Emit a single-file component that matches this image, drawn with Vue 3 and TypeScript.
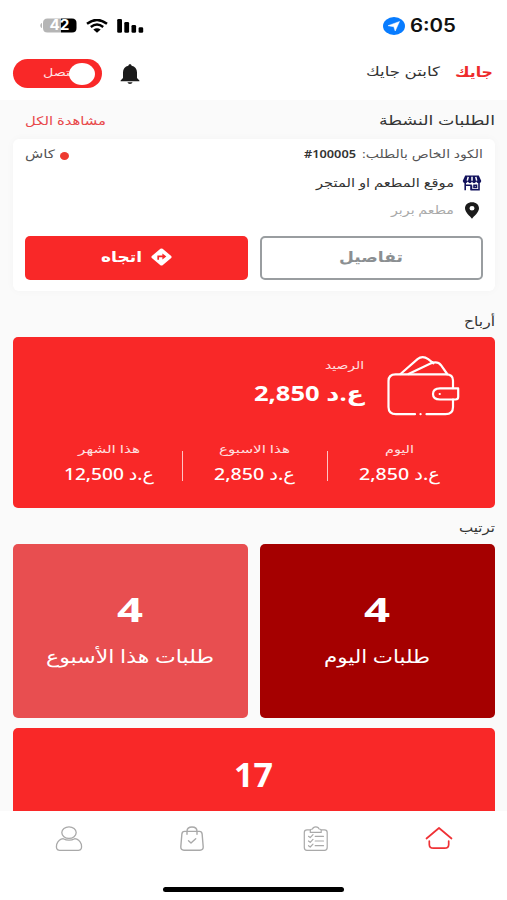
<script setup lang="ts">
import { h, type FunctionalComponent } from 'vue'

interface LabelProps {
  text: string
  w: number
  size: number
  h?: number
}

// Single-line label whose glyphs are fitted to a given width.
const FitText: FunctionalComponent<LabelProps> = (p) => {
  const height = p.h ?? 20
  return h('svg', { width: p.w, height, class: 'fit' }, [
    h(
      'text',
      {
        x: p.w / 2,
        y: height / 2 + p.size * 0.36,
        'font-size': p.size,
        'text-anchor': 'middle',
        textLength: p.w,
        lengthAdjust: 'spacingAndGlyphs',
        fill: 'currentColor',
      },
      p.text,
    ),
  ])
}
FitText.props = ['text', 'w', 'size', 'h']

interface Period {
  label: string
  labelWidth: number
  amount: string
  amountWidth: number
}

const periods: Period[] = [
  { label: 'اليوم', labelWidth: 29, amount: 'ع.د 2,850', amountWidth: 81 },
  { label: 'هذا الاسبوع', labelWidth: 71, amount: 'ع.د 2,850', amountWidth: 81 },
  { label: 'هذا الشهر', labelWidth: 62, amount: 'ع.د 12,500', amountWidth: 90 },
]

const tiles = [
  { tone: 'dark', count: '4', label: 'طلبات اليوم', width: 106 },
  { tone: 'soft', count: '4', label: 'طلبات هذا الأسبوع', width: 168 },
]
</script>

<template>
  <div class="screen" dir="rtl">
    <div class="status">
      <FitText class="time" text="6:05" :w="46" :size="18" />
      <svg class="loc" width="22" height="18" viewBox="0 0 22 18">
        <ellipse cx="11" cy="9" rx="11" ry="9" fill="#087cff" />
        <path d="M16.5 4.5 12.2 14 10.8 9.7 5 8.7Z" fill="#fff" stroke="#fff" stroke-width=".5" stroke-linejoin="round" />
      </svg>
      <span class="grow"></span>
      <svg class="signal" width="27" height="14" viewBox="0 0 27 14">
        <rect x="0.2" y="0" width="4.8" height="13.8" rx="1.3" />
        <rect x="7.3" y="3" width="4.8" height="10.8" rx="1.3" />
        <rect x="14.5" y="6" width="4.6" height="7.8" rx="1.3" />
        <rect x="21.6" y="8.3" width="4.6" height="5.5" rx="1.3" />
      </svg>
      <svg class="wifi" width="22" height="14" viewBox="0 0 22 14">
        <path d="M1 4.8Q11-3 21 4.8M4.8 8Q11 3.1 17.2 8" fill="none" stroke="#000" stroke-width="2.4" />
        <path d="M7.3 10.6Q11 7.9 14.7 10.6L11 13.8Z" />
      </svg>
      <svg class="battery" width="37" height="15" viewBox="0 0 37 15">
        <path d="M2 5C-.3 5.5-.3 9.5 2 10Z" fill="#b8b8b8" />
        <path d="M21 .5H7.5Q3 .5 3 5V10Q3 14.5 7.5 14.5H21Z" fill="#b5b5b5" />
        <path d="M21 .5H32Q36.5 .5 36.5 5V10Q36.5 14.5 32 14.5H21Z" fill="#000" />
        <text x="19.5" y="12.4" text-anchor="middle" textLength="20" lengthAdjust="spacingAndGlyphs" font-size="14" font-weight="700" fill="#fff">42</text>
      </svg>
    </div>

    <header class="header">
      <FitText class="brand" text="جايك" :w="38" :size="14" />
      <FitText class="name" text="كابتن جايك" :w="74" :size="13" />
      <span class="grow"></span>
      <svg class="bell" width="20" height="20" viewBox="0 0 20 20">
        <path d="M10 0.3C9 .3 8.4 1 8.4 1.8 5 2.5 3 5 3 8.3V14L.6 16.4V17.3H19.4V16.4L17 14V8.3C17 5 15 2.5 11.6 1.8 11.6 1 11 .3 10 .3ZM7.4 18.2Q8 20 10 20T12.6 18.2Z" fill="#1b1b1b" />
      </svg>
      <div class="toggle">
        <span class="knob"></span>
        <FitText class="state" text="متصل" :w="35" :size="10.5" />
      </div>
    </header>

    <main class="content">
      <div class="title first">
        <FitText text="الطلبات النشطة" :w="116" :size="13" />
        <FitText class="link" text="مشاهدة الكل" :w="81" :size="12" />
      </div>

      <section class="order">
        <div class="line code">
          <FitText class="muted" text="الكود الخاص بالطلب:" :w="121" :size="11.5" />
          <FitText class="number" text="#100005" :w="52" :size="11.5" />
          <span class="grow"></span>
          <span class="dot"></span>
          <FitText class="muted" text="كاش" :w="30" :size="11.5" />
        </div>
        <div class="line shop">
          <svg width="20" height="16" viewBox="0 0 20 16">
            <path d="M3.2.5H16.8L19.3 6Q18.8 8.2 16.8 8.2T14.2 6.6Q13.3 8.2 12 8.2T10 6.6Q9.2 8.2 8 8.2T5.8 6.6Q5 8.2 3.2 8.2T.7 6Z" fill="#11115c" />
            <path d="M6.2 1.8 5.3 5.7M10 1.8V5.7M13.8 1.8 14.7 5.7" stroke="#fff" stroke-width="1.5" />
            <path d="M3.2 8V15.2M17 8V14.8H9.5V10.6M3.2 10.3H9V15.2M12 10.3H14.5V12.5H12Z" fill="none" stroke="#11115c" stroke-width="1.6" />
          </svg>
          <FitText text="موقع المطعم او المتجر" :w="138" :size="12" />
        </div>
        <div class="line place">
          <svg width="20" height="17" viewBox="0 0 20 17">
            <path fill-rule="evenodd" d="M10 .3C5.8.3 3 2.9 3 6.3 3 10.5 8.2 14.3 10 16.7 11.8 14.3 17 10.5 17 6.3 17 2.9 14.2.3 10 .3ZM10 4.1A2.5 2.2 0 1 1 10 8.5 2.5 2.2 0 1 1 10 4.1Z" fill="#1b1b1b" />
          </svg>
          <FitText class="faint" text="مطعم بربر" :w="63" :size="11.5" />
        </div>
        <div class="actions">
          <button class="btn outline" type="button">
            <FitText text="تفاصيل" :w="64" :size="15" />
          </button>
          <button class="btn solid" type="button">
            <svg width="21" height="18" viewBox="0 0 21 18">
              <path d="M9.4.8Q10.5 0 11.6.8L20.2 8Q21 9 20.2 10L11.6 17.2Q10.5 18 9.4 17.2L.8 10Q0 9 .8 8Z" fill="#fff" />
              <path d="M7.2 11.7V8.4H12" fill="none" stroke="#f92828" stroke-width="1.7" />
              <path d="M11.4 5.4 15.3 8.4 11.4 11.4Z" fill="#f92828" />
            </svg>
            <FitText text="اتجاه" :w="41" :size="15" />
          </button>
        </div>
      </section>

      <div class="title second"><FitText text="أرباح" :w="31" :size="13" /></div>

      <section class="wallet">
        <div class="balance">
          <svg width="73" height="60" viewBox="0 0 73 60" fill="none" stroke="#fff" stroke-width="2.2" stroke-linecap="round">
            <path d="M28 58.2H9Q1.5 58.2 1.5 51V25Q1.5 18.3 8.5 18.3H59Q66 18.3 66 24.5V32.2M66 43.7V51Q66 58.2 58.5 58.2H39.5M33.5 58.2H33.6" />
            <path d="M71.2 32.4H53Q46 32.6 46 38T53 43.5H68.5Q71.2 43.5 71.2 41ZM52.7 38H52.8" stroke-linejoin="round" />
            <path d="M13.5 18 30.5 3.2Q35.5-.8 41.2 3.2L46.5 7.4M21.5 18 43.5 7.6Q50.5 4.7 54 9.2L60.2 18" />
          </svg>
          <div class="figures">
            <FitText class="caption" text="الرصيد" :w="39" :size="11" :h="18" />
            <FitText class="total" text="ع.د 2,850" :w="110" :size="21" :h="39" />
          </div>
        </div>
        <div class="periods">
          <div v-for="p in periods" :key="p.label" class="period">
            <FitText class="caption" :text="p.label" :w="p.labelWidth" :size="11" :h="18" />
            <FitText class="amount" :text="p.amount" :w="p.amountWidth" :size="17" :h="32" />
          </div>
        </div>
      </section>

      <div class="title third"><FitText text="ترتيب" :w="36" :size="13" /></div>

      <div class="tiles">
        <div v-for="t in tiles" :key="t.tone" class="tile" :class="t.tone">
          <FitText class="count" :text="t.count" :w="26" :size="34" :h="43" />
          <FitText :text="t.label" :w="t.width" :size="18" :h="52" />
        </div>
      </div>

      <div class="tile total-tile">
        <FitText class="count" text="17" :w="39" :size="34" :h="41" />
      </div>
    </main>

    <nav class="nav">
      <div class="tabs">
        <a class="tab active">
          <svg width="28" height="26" viewBox="0 0 28 26" stroke-width="1.7">
            <path d="M1.5 12.5 14 2 26.5 12.5M4.3 15V18.5Q4.3 22.2 8.5 22.2H19.5Q23.7 22.2 23.7 18.5V15" />
          </svg>
        </a>
        <a class="tab">
          <svg width="28" height="26" viewBox="0 0 28 26" stroke-width="1.2">
            <path d="M8.5 3.8H5Q2.3 3.8 2.3 6.5V21.5Q2.3 24.3 5 24.3H22.5Q25.2 24.3 25.2 21.5V6.5Q25.2 3.8 22.5 3.8H19M8.3 6.4V4.5Q8.3 3 10.5 3 11 .8 13.8.8T17 3Q19.2 3 19.2 4.5V6.4ZM6.5 10.3 8.2 11.6 11 8.7M13.2 10.3H21.5M6.5 15 8.2 16.3 11 13.4M13.2 15H21.5M6.5 19.7 8.2 21 11 18.1M13.2 19.7H21.5" />
          </svg>
        </a>
        <a class="tab">
          <svg width="28" height="26" viewBox="0 0 28 26" stroke-width="1.4">
            <path d="M6.5 5.4H21.5Q23.8 5.4 24.1 7.8L25.2 20.8Q25.4 24.2 22 24.2H6Q2.6 24.2 2.8 20.8L3.9 7.8Q4.2 5.4 6.5 5.4ZM9 8.3V5.4Q9 1 14 1T19 5.4V8.3M10.5 14.8 13 17 17.7 12.8" />
          </svg>
        </a>
        <a class="tab">
          <svg width="28" height="26" viewBox="0 0 28 26" stroke-width="1.3">
            <ellipse cx="14" cy="6.6" rx="7.2" ry="5.8" />
            <path d="M8.2 12.7Q3.8 13.3 1.7 18.2.5 24.3 4.5 24.3H23.5Q27.5 24.3 26.3 18.2 24.2 13.3 19.8 12.7 17 14.2 14 14.2T8.2 12.7Z" />
          </svg>
        </a>
      </div>
      <div class="indicator"></div>
    </nav>
  </div>
</template>

<style>
body {
  margin: 0;
}
</style>

<style scoped>
.screen {
  width: 507px;
  height: 900px;
  display: flex;
  flex-direction: column;
  overflow: hidden;
  background: #fff;
  color: #333;
  font-family: 'Noto Sans', 'DejaVu Sans', sans-serif;
}
svg {
  display: block;
  flex: none;
}
.fit {
  overflow: visible;
}
.grow {
  flex: 1;
}
.status {
  height: 51px;
  padding: 0 51px 0 40px;
  display: flex;
  align-items: center;
  flex: none;
}
.time {
  color: #111;
  font-family: Inter, sans-serif;
  font-weight: 600;
}
.loc {
  margin-right: 5px;
}
.wifi {
  margin: 0 9px;
}
.battery {
  direction: ltr;
  font-family: Inter, sans-serif;
}
.header {
  height: 45px;
  padding: 0 14px 4px 12.5px;
  display: flex;
  align-items: center;
  flex: none;
}
.brand {
  margin-bottom: 4px;
  color: #ee2b2b;
  font-weight: 700;
}
.name {
  margin-right: 15px;
  margin-bottom: 5px;
}
.toggle {
  width: 89px;
  height: 29px;
  margin-right: 18px;
  padding-right: 7px;
  box-sizing: border-box;
  border-radius: 15px;
  background: #f92828;
  display: flex;
  align-items: center;
}
.knob {
  width: 26px;
  height: 22px;
  border-radius: 50%;
  background: #fff;
  z-index: 1;
}
.state {
  color: #ffe3e3;
  margin-right: -9px;
  margin-bottom: 4px;
}
.content {
  height: 711px;
  flex: none;
  padding: 0 12px 0 12.5px;
  overflow: hidden;
  background: #fafafa;
}
.title {
  display: flex;
  justify-content: space-between;
  align-items: center;
  box-sizing: border-box;
}
.first {
  height: 39px;
  padding-left: 12.5px;
}
.second {
  height: 46px;
  padding-top: 13px;
}
.third {
  height: 36px;
  padding-top: 1px;
}
.link {
  margin-top: 2px;
  color: #e8484a;
}
.order {
  height: 152px;
  box-sizing: border-box;
  padding: 0 12px 11px;
  border-radius: 6px;
  background: #fff;
  box-shadow: 0 0 8px rgba(0, 0, 0, 0.03);
}
.line {
  display: flex;
  align-items: center;
}
.code {
  height: 30px;
}
.shop,
.place {
  gap: 8px;
  padding-right: 1px;
}
.shop {
  height: 28px;
}
.place {
  height: 26px;
}
.muted {
  color: #555;
}
.number {
  margin-right: 6px;
  color: #333;
  font-weight: 600;
}
.faint {
  color: #aaa;
}
.dot {
  width: 9px;
  height: 8px;
  margin: 3px 0 0 5px;
  border-radius: 50%;
  background: #ee3a30;
}
.actions {
  display: grid;
  grid-template-columns: 1fr 1fr;
  gap: 12px;
  padding-top: 13px;
}
.btn {
  height: 44px;
  box-sizing: border-box;
  padding: 0 0 3px;
  border: 0;
  border-radius: 5px;
  display: flex;
  align-items: center;
  justify-content: center;
  gap: 9px;
  font-family: inherit;
  font-weight: 700;
}
.outline {
  border: 2px solid #999da0;
  background: #fff;
  color: #8b8f92;
}
.solid {
  background: #f92828;
  color: #fff;
}
.wallet {
  height: 171px;
  box-sizing: border-box;
  padding-top: 19px;
  border-radius: 5px;
  background: #f92828;
  color: #fff;
}
.balance {
  display: flex;
  gap: 23px;
  padding-right: 35px;
}
.figures {
  display: flex;
  flex-direction: column;
  align-items: flex-start;
}
.caption {
  color: #ffe0e0;
}
.total,
.count {
  font-weight: 700;
}
.amount {
  font-weight: 500;
}
.periods {
  display: flex;
  margin: 24px 23px 0 24px;
}
.period {
  flex: 1;
  display: flex;
  flex-direction: column;
  align-items: center;
  background: linear-gradient(#ffc4c4, #ffc4c4) left 11px / 1.5px 30px no-repeat;
  background-position-x: -0.5px;
}
.period:last-child {
  background: none;
}
.tiles {
  display: flex;
  gap: 12px;
}
.tile {
  flex: 1;
  height: 174px;
  box-sizing: border-box;
  padding-top: 44px;
  border-radius: 5px;
  display: flex;
  flex-direction: column;
  align-items: center;
  color: #fff;
}
.dark {
  background: #a50000;
}
.soft {
  background: #e84e50;
}
.total-tile {
  margin-top: 10px;
  padding-top: 26px;
  background: #f92828;
}
.nav {
  flex: 1;
  background: #fff;
}
.tabs {
  display: flex;
  padding: 15px 6px 0 7px;
}
.tab {
  flex: 1;
  display: flex;
  justify-content: center;
  fill: none;
  stroke: #a9a9a9;
  stroke-linecap: round;
  stroke-linejoin: round;
}
.active {
  stroke: #ef3135;
}
.indicator {
  width: 181px;
  height: 5px;
  margin: 35px auto 0;
  border-radius: 3px;
  background: #000;
}
</style>
